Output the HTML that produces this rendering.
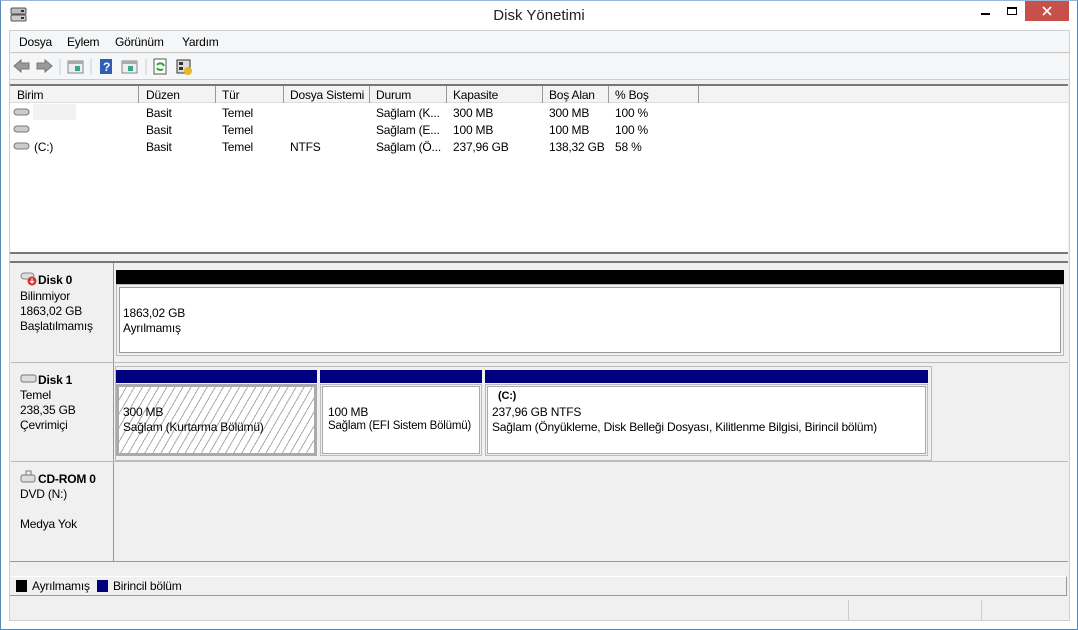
<!DOCTYPE html>
<html><head><meta charset="utf-8"><style>
*{margin:0;padding:0;box-sizing:border-box}
body{width:1078px;height:630px;overflow:hidden;background:#fff;font-family:"Liberation Sans",sans-serif;font-size:12px;color:#000;position:relative}
.a{position:absolute}
.t{position:absolute;white-space:nowrap;font-size:12px;letter-spacing:-0.2px}
</style></head><body>
<div class="a" style="left:0;top:0;width:1078px;height:630px;border:1px solid #5b87b8;border-top-color:#9bb6d6"></div>
<!-- title -->
<svg class="a" style="left:10px;top:7px" width="18" height="16"><rect x="1" y="1" width="15" height="6" rx="1" fill="#bbb" stroke="#555"/><rect x="1" y="8" width="15" height="6" rx="1" fill="#ccc" stroke="#555"/><rect x="11" y="3" width="3" height="2" fill="#333"/><rect x="11" y="10" width="3" height="2" fill="#333"/></svg>
<div class="t" style="left:0;width:1078px;text-align:center;top:7px;font-size:15px;color:#222;letter-spacing:0">Disk Yönetimi</div>
<div class="a" style="left:981px;top:13px;width:9px;height:2px;background:#000"></div>
<div class="a" style="left:1007px;top:7px;width:10px;height:8px;border:1px solid #000;border-top-width:2px"></div>
<div class="a" style="left:1025px;top:1px;width:44px;height:20px;background:#c7504b"></div>
<svg class="a" style="left:1025px;top:1px" width="44" height="20"><path d="M18 6l8 8M26 6l-8 8" stroke="#fff" stroke-width="1.6"/></svg>
<!-- frame -->
<div class="a" style="left:9px;top:30px;width:1061px;height:591px;background:#f0f0f0;border:1px solid #d0d0d0"></div>
<div class="a" style="left:10px;top:31px;width:1059px;height:22px;background:#f5f6f7;border-bottom:1px solid #c8c8c8"></div>
<div class="t" style="left:19px;top:35px">Dosya</div>
<div class="t" style="left:67px;top:35px">Eylem</div>
<div class="t" style="left:115px;top:35px">Görünüm</div>
<div class="t" style="left:182px;top:35px">Yardım</div>
<div class="a" style="left:10px;top:54px;width:1059px;height:26px;background:#f5f6f7;border-bottom:1px solid #ccc"></div>
<svg class="a" style="left:12px;top:57px" width="185" height="20">
<path d="M2 9 L9 3 V6 H17 V12 H9 V15 Z" fill="#999" stroke="#777"/>
<path d="M40 9 L33 3 V6 H25 V12 H33 V15 Z" fill="#999" stroke="#777"/>
<line x1="48" y1="2" x2="48" y2="18" stroke="#ccc"/>
<rect x="56" y="4" width="15" height="12" fill="#eee" stroke="#888"/><rect x="56" y="4" width="15" height="3" fill="#aaa"/><rect x="63" y="9" width="5" height="5" fill="#3a8"/>
<line x1="79" y1="2" x2="79" y2="18" stroke="#ccc"/>
<rect x="88" y="2" width="12" height="15" fill="#2d5fb8"/><text x="91" y="14" fill="#fff" font-size="12" font-family="Liberation Sans" font-weight="bold">?</text>
<rect x="110" y="4" width="15" height="12" fill="#eee" stroke="#888"/><rect x="110" y="4" width="15" height="3" fill="#aaa"/><rect x="116" y="9" width="5" height="5" fill="#3a8"/>
<line x1="134" y1="2" x2="134" y2="18" stroke="#ccc"/>
<rect x="142" y="2" width="12" height="15" fill="#fff" stroke="#555"/><path d="M145 8 A4 4 0 0 1 152 9 M151 12 A4 4 0 0 1 145 11" stroke="#2a2" stroke-width="2" fill="none"/>
<rect x="165" y="3" width="13" height="13" fill="#ddd" stroke="#333"/><rect x="167" y="5" width="4" height="3" fill="#333"/><rect x="167" y="10" width="4" height="3" fill="#333"/><circle cx="176" cy="14" r="4" fill="#e8b820"/>
</svg>
<!-- list -->
<div class="a" style="left:10px;top:84px;width:1058px;height:170px;background:#fff;border-top:2px solid #777;border-bottom:2px solid #777"></div>
<div class="a" style="left:10px;top:86px;width:1058px;height:17px;background:#f3f3f3;border-bottom:1px solid #ddd"></div>
<div class="a" style="left:138px;top:86px;width:1px;height:17px;background:#999"></div>
<div class="a" style="left:215px;top:86px;width:1px;height:17px;background:#999"></div>
<div class="a" style="left:283px;top:86px;width:1px;height:17px;background:#999"></div>
<div class="a" style="left:369px;top:86px;width:1px;height:17px;background:#999"></div>
<div class="a" style="left:446px;top:86px;width:1px;height:17px;background:#999"></div>
<div class="a" style="left:542px;top:86px;width:1px;height:17px;background:#999"></div>
<div class="a" style="left:608px;top:86px;width:1px;height:17px;background:#999"></div>
<div class="a" style="left:698px;top:86px;width:1px;height:17px;background:#999"></div>
<div class="t" style="left:17px;top:88px">Birim</div><div class="t" style="left:146px;top:88px">Düzen</div><div class="t" style="left:222px;top:88px">Tür</div><div class="t" style="left:290px;top:88px">Dosya Sistemi</div><div class="t" style="left:376px;top:88px">Durum</div><div class="t" style="left:453px;top:88px">Kapasite</div><div class="t" style="left:549px;top:88px">Boş Alan</div><div class="t" style="left:615px;top:88px">% Boş</div>
<div class="a" style="left:33px;top:104px;width:43px;height:16px;background:#f2f2f2"></div>
<svg class="a" style="left:13px;top:108px" width="18" height="45"><g fill="#ccc" stroke="#777"><rect x="1" y="1" width="15" height="6" rx="3"/><rect x="1" y="18" width="15" height="6" rx="3"/><rect x="1" y="35" width="15" height="6" rx="3"/></g></svg>
<div class="t" style="left:34px;top:140px">(C:)</div>
<div class="t" style="left:146px;top:106px">Basit</div><div class="t" style="left:222px;top:106px">Temel</div><div class="t" style="left:376px;top:106px">Sağlam (K...</div><div class="t" style="left:453px;top:106px">300 MB</div><div class="t" style="left:549px;top:106px">300 MB</div><div class="t" style="left:615px;top:106px">100 %</div>
<div class="t" style="left:146px;top:123px">Basit</div><div class="t" style="left:222px;top:123px">Temel</div><div class="t" style="left:376px;top:123px">Sağlam (E...</div><div class="t" style="left:453px;top:123px">100 MB</div><div class="t" style="left:549px;top:123px">100 MB</div><div class="t" style="left:615px;top:123px">100 %</div>
<div class="t" style="left:146px;top:140px">Basit</div><div class="t" style="left:222px;top:140px">Temel</div><div class="t" style="left:290px;top:140px">NTFS</div><div class="t" style="left:376px;top:140px">Sağlam (Ö...</div><div class="t" style="left:453px;top:140px">237,96 GB</div><div class="t" style="left:549px;top:140px">138,32 GB</div><div class="t" style="left:615px;top:140px">58 %</div>
<!-- graphical -->
<div class="a" style="left:10px;top:261px;width:1058px;height:301px;background:#f0f0f0;border-top:2px solid #777;border-bottom:1px solid #999"></div>
<div class="a" style="left:113px;top:263px;width:1px;height:298px;background:#999"></div>
<div class="a" style="left:11px;top:362px;width:1057px;height:1px;background:#bbb"></div>
<div class="a" style="left:11px;top:461px;width:1057px;height:1px;background:#bbb"></div>
<!-- disk0 -->
<svg class="a" style="left:20px;top:272px" width="18" height="14"><rect x="1" y="1" width="13" height="6" rx="3" fill="#ddd" stroke="#888"/><circle cx="12" cy="9" r="4.5" fill="#c33"/><path d="M12 6v5M10 9l2 2 2-2" stroke="#fff" fill="none"/></svg>
<div class="t" style="left:38px;top:273px;font-weight:bold">Disk 0</div>
<div class="t" style="left:20px;top:289px">Bilinmiyor</div><div class="t" style="left:20px;top:304px">1863,02 GB</div><div class="t" style="left:20px;top:319px">Başlatılmamış</div>
<div class="a" style="left:116px;top:270px;width:948px;height:14px;background:#000"></div>
<div class="a" style="left:116px;top:284px;width:948px;height:72px;background:#f0f0f0;border:1px solid #bbb"></div>
<div class="a" style="left:119px;top:287px;width:942px;height:66px;background:#fff;border:1px solid #999"></div>
<div class="t" style="left:123px;top:306px">1863,02 GB</div><div class="t" style="left:123px;top:321px">Ayrılmamış</div>
<!-- disk1 -->
<svg class="a" style="left:20px;top:374px" width="18" height="10"><rect x="1" y="1" width="15" height="7" rx="2" fill="#ddd" stroke="#777"/></svg>
<div class="t" style="left:38px;top:373px;font-weight:bold">Disk 1</div>
<div class="t" style="left:20px;top:388px">Temel</div><div class="t" style="left:20px;top:403px">238,35 GB</div><div class="t" style="left:20px;top:418px">Çevrimiçi</div>
<div class="a" style="left:115px;top:366px;width:817px;height:95px;border:1px solid #bbb;background:#f0f0f0"></div>
<div class="a" style="left:116px;top:370px;width:201px;height:13px;background:#000080"></div>
<div class="a" style="left:320px;top:370px;width:162px;height:13px;background:#000080"></div>
<div class="a" style="left:485px;top:370px;width:443px;height:13px;background:#000080"></div>
<div class="a" style="left:116px;top:384px;width:201px;height:72px;border:3px solid #aaa;background:repeating-linear-gradient(-60deg,#fff 0 6px,#aaa 6px 7px)"></div>
<div class="t" style="left:123px;top:405px">300 MB</div><div class="t" style="left:123px;top:420px">Sağlam (Kurtarma Bölümü)</div>
<div class="a" style="left:320px;top:384px;width:162px;height:72px;border:1px solid #bbb;background:#f0f0f0"></div>
<div class="a" style="left:322px;top:386px;width:158px;height:68px;background:#fff;border:1px solid #aaa"></div>
<div class="t" style="left:328px;top:405px">100 MB</div><div class="t" style="left:328px;top:420px;font-size:11.5px">Sağlam (EFI Sistem Bölümü)</div>
<div class="a" style="left:485px;top:384px;width:443px;height:72px;border:1px solid #bbb;background:#f0f0f0"></div>
<div class="a" style="left:487px;top:386px;width:439px;height:68px;background:#fff;border:1px solid #aaa"></div>
<div class="t" style="left:498px;top:390px;font-weight:bold;font-size:11px">(C:)</div>
<div class="t" style="left:492px;top:405px">237,96 GB NTFS</div><div class="t" style="left:492px;top:420px">Sağlam (Önyükleme, Disk Belleği Dosyası, Kilitlenme Bilgisi, Birincil bölüm)</div>
<!-- cdrom -->
<svg class="a" style="left:20px;top:469px" width="18" height="16"><rect x="1" y="6" width="14" height="7" rx="2" fill="#ddd" stroke="#777"/><path d="M6 2h5v4H6z" fill="#eee" stroke="#777"/></svg>
<div class="t" style="left:38px;top:472px;font-weight:bold">CD-ROM 0</div>
<div class="t" style="left:20px;top:487px">DVD (N:)</div><div class="t" style="left:20px;top:517px">Medya Yok</div>
<!-- legend -->
<div class="a" style="left:10px;top:576px;width:1057px;height:20px;border-top:1px solid #fff;border-bottom:1px solid #999;border-right:1px solid #999"></div>
<div class="a" style="left:16px;top:580px;width:11px;height:12px;background:#000"></div>
<div class="t" style="left:32px;top:579px">Ayrılmamış</div>
<div class="a" style="left:97px;top:580px;width:11px;height:12px;background:#000080"></div>
<div class="t" style="left:113px;top:579px">Birincil bölüm</div>
<div class="a" style="left:848px;top:600px;width:1px;height:20px;background:#ccc"></div>
<div class="a" style="left:981px;top:600px;width:1px;height:20px;background:#ccc"></div>
</body></html>
